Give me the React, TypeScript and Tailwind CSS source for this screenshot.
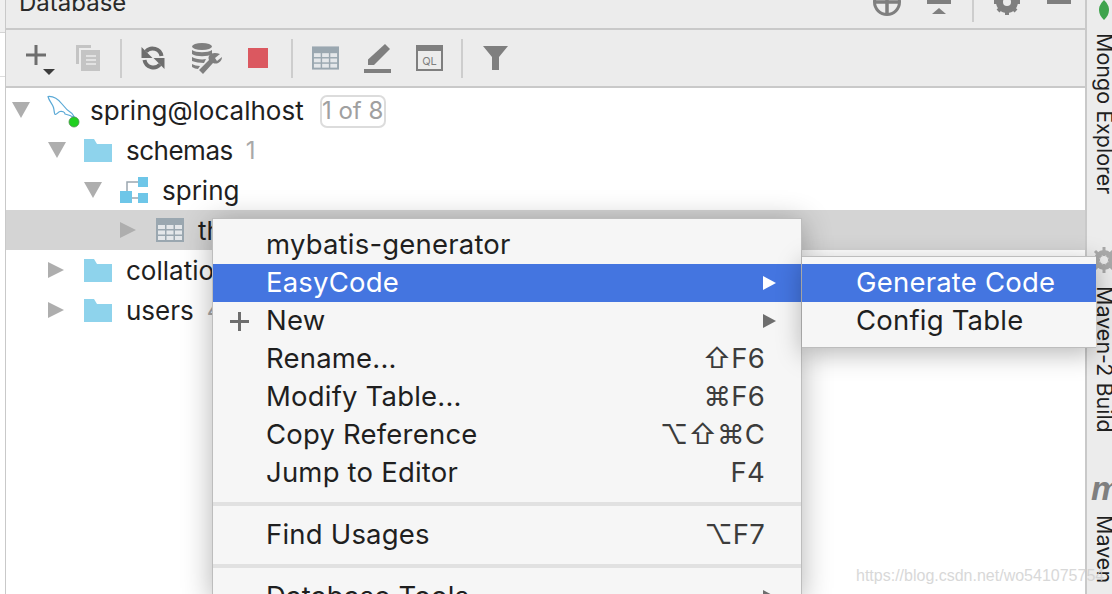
import React from "react";

const G = "#7f7f7f";

function TriDown() {
  return <svg width="18" height="16" viewBox="0 0 18 16" className="block"><path d="M0 0H18L9 16Z" fill="#aeaeae" /></svg>;
}
function TriRight() {
  return <svg width="16" height="16" viewBox="0 0 16 16" className="block"><path d="M0 0L16 8L0 16Z" fill="#aeaeae" /></svg>;
}
function Folder() {
  return <svg width="28" height="23" viewBox="0 0 28 23" className="block"><path d="M0 0H10L13 5H28V23H0Z" fill="#8ed3ec" /></svg>;
}
function TableIcon({ w = 28, h = 24 }: { w?: number; h?: number }) {
  return (
    <svg width={w} height={h} viewBox="0 0 28 24" className="block">
      <rect width="28" height="24" fill="#9aa7b0" />
      <g fill="#e4e7ea">
        <rect x="2" y="7" width="7" height="4" /><rect x="10.5" y="7" width="7" height="4" /><rect x="19" y="7" width="7" height="4" />
        <rect x="2" y="12.5" width="7" height="4" /><rect x="10.5" y="12.5" width="7" height="4" /><rect x="19" y="12.5" width="7" height="4" />
        <rect x="2" y="18" width="7" height="4" /><rect x="10.5" y="18" width="7" height="4" /><rect x="19" y="18" width="7" height="4" />
      </g>
    </svg>
  );
}
function SchemaIcon() {
  return (
    <svg width="28" height="26" viewBox="0 0 28 26" className="block">
      <path d="M7 15V5H18M11 21H18" stroke="#9aa7b0" strokeWidth="1.5" fill="none" />
      <rect x="18" y="0" width="10" height="10" fill="#6ec6e8" />
      <rect x="0" y="14" width="12" height="12" fill="#6ec6e8" />
      <rect x="18" y="16" width="10" height="10" fill="#6ec6e8" />
    </svg>
  );
}
function Dolphin() {
  return (
    <svg width="34" height="36" viewBox="0 0 34 36" className="block">
      <path d="M2 2.5C7 2 12 5 16 10C19 14 22 17 26 19.5L29 24C25 21.5 22 20.5 19 20C19 18 16 17 14 17.5C12 18 11 20.5 9.5 20.5C8 20.5 8.5 17 7.5 13.5C6.5 10 3 7 2 2.5Z" fill="none" stroke="#5aa9d6" strokeWidth="1.2" strokeLinejoin="round" />
      <circle cx="28" cy="28" r="5" fill="#1fd01f" stroke="#4f8f4f" strokeWidth="0.8" />
    </svg>
  );
}
function Sep() {
  return <div className="w-[2px] h-[39px] bg-[#cdcdcd]" />;
}
function Row({ pad, open, icon, label, count, badge, selected, tight }: { pad: string; open?: boolean; icon: React.ReactNode; label: string; count?: string; badge?: string; selected?: boolean; tight?: boolean }) {
  return (
    <div className={`h-10 flex items-center ${pad} ${selected ? "bg-[#d4d4d4]" : ""}`}>
      <div className="w-[36px] shrink-0">{open ? <TriDown /> : <TriRight />}</div>
      <div className="w-[42px] shrink-0">{icon}</div>
      <span className={`pt-[2px] text-[#1f1f1f] text-[26px] leading-none ${tight ? "tracking-[-0.5px]" : ""}`}>{label}</span>
      {count && <span className="pt-[2px] ml-[13px] text-[#a8a8a8] text-[24px] leading-none">{count}</span>}
      {badge && <span className="ml-[16px] mt-[2px] h-[33px] w-[66px] flex items-center justify-center border-2 border-[#dcdcdc] rounded-[7px] text-[#a0a0a0] text-[24px] leading-none">{badge}</span>}
    </div>
  );
}
function MenuRow({ label, shortcut, arrow, active, plus }: { label: string; shortcut?: string; arrow?: boolean; active?: boolean; plus?: boolean }) {
  return (
    <div className={`h-[38px] shrink-0 flex items-center pl-[17px] pr-[25px] ${active ? "bg-[#4475e0] text-white" : "text-[#1f1f1f]"}`}>
      <div className="w-[36px] shrink-0">
        {plus && <svg width="19" height="19" viewBox="0 0 19 19" className="block"><path d="M8 0H11V8H19V11H11V19H8V11H0V8H8Z" fill="#6e6e6e" /></svg>}
      </div>
      <span className="flex-1">{label}</span>
      {shortcut && <span className="mr-[11px] text-[#3c3c3c]">{shortcut}</span>}
      {arrow && <svg width="13" height="14" viewBox="0 0 13 14" className="block"><path d="M0 0L13 7L0 14Z" fill={active ? "#ffffff" : "#6e6e6e"} /></svg>}
    </div>
  );
}
function MenuSep() {
  return <div className="h-[24px] shrink-0 flex items-center"><div className="h-[4px] w-full bg-[#e1e1e1]" /></div>;
}
function Vert({ children }: { children: React.ReactNode }) {
  return <span className="block [writing-mode:vertical-rl] text-[#1f1f1f] text-[21.5px] leading-none whitespace-nowrap">{children}</span>;
}

export default function App() {
  return (
    <div className="relative w-[1112px] h-[594px] overflow-hidden flex bg-white font-['Inter','DejaVu_Sans',sans-serif]">
      {/* left gutter */}
      <div className="w-[5px] shrink-0 flex flex-col">
        <div className="h-[33px] bg-[#f0f0f0] border-b border-[#d4d4d4]" />
        <div className="h-[44px] bg-white border-b border-[#dddddd]" />
        <div className="flex-1 bg-white" />
      </div>
      {/* main panel */}
      <div className="flex-1 min-w-0 flex flex-col border-l border-[#c9c9c9]">
        <div className="h-[30px] shrink-0 bg-[#ececec] border-b-2 border-[#c9c9c9] flex items-start overflow-hidden pl-[13px] pr-[14px]">
          <span className="text-[24px] leading-none text-[#2a2a2a] mt-[-9px]">Database</span>
          <div className="ml-auto flex items-start">
            <svg width="28" height="28" viewBox="0 0 28 28" className="mt-[-12px] block">
              <circle cx="14" cy="14" r="12.5" fill="none" stroke={G} strokeWidth="3" />
              <path d="M14 2V26M2 14H26" stroke={G} strokeWidth="3.5" />
            </svg>
            <svg width="24" height="14" viewBox="0 0 24 14" className="ml-[26px] block">
              <rect width="24" height="4" fill={G} /><path d="M12 8L19 14H5Z" fill={G} />
            </svg>
            <div className="ml-[21px] w-[2px] h-[22px] bg-[#cdcdcd]" />
            <svg width="26" height="26" viewBox="0 0 26 26" className="ml-[20px] mt-[-11px] block">
              <circle cx="13" cy="13" r="8" fill="none" stroke={G} strokeWidth="6" />
              <path d="M13 0V26M0 13H26M4 4L22 22M22 4L4 22" stroke={G} strokeWidth="4" />
              <circle cx="13" cy="13" r="4" fill="#ececec" />
            </svg>
            <svg width="24" height="4" viewBox="0 0 24 4" className="ml-[27px] block"><rect width="24" height="4" fill={G} /></svg>
          </div>
        </div>
        <div className="h-[58px] shrink-0 bg-[#ececec] border-b-2 border-[#c9c9c9] flex items-center pl-[20px]">
          <svg width="29" height="30" viewBox="0 0 29 30" className="block mt-[4px]">
            <path d="M8.5 0H11.5V8.5H20V11.5H11.5V20H8.5V11.5H0V8.5H8.5Z" fill="#6e6e6e" />
            <path d="M17 24H29L23 30Z" fill="#3c3c3c" />
          </svg>
          <svg width="24" height="26" viewBox="0 0 24 26" className="ml-[21px] block">
            <path d="M0 0H15V3H3V19H0Z" fill="#c4c4c4" />
            <rect x="5" y="5" width="19" height="21" fill="#c4c4c4" />
            <path d="M10 11H20M10 15H20M10 19H20" stroke="#ececec" strokeWidth="1.5" />
          </svg>
          <div className="ml-[20px]"><Sep /></div>
          <svg width="24" height="24" viewBox="0 0 24 24" className="ml-[19px] block">
            <path d="M20.5 10A9 9 0 0 0 5 5.5" fill="none" stroke="#6e6e6e" strokeWidth="4" />
            <path d="M3.5 14A9 9 0 0 0 19 18.5" fill="none" stroke="#6e6e6e" strokeWidth="4" />
            <path d="M0.5 1V12H11.5Z" fill="#6e6e6e" /><path d="M23.5 23V12H12.5Z" fill="#6e6e6e" />
          </svg>
          <svg width="30" height="31" viewBox="0 0 30 31" className="ml-[27px] block">
            <ellipse cx="10" cy="3.5" rx="10" ry="3.5" fill={G} />
            <path d="M0 7C4 10 16 10 20 7V11C16 14 4 14 0 11Z" fill={G} />
            <path d="M0 14C3 16 10 17 14 16L12 20C8 20 3 19 0 18Z" fill={G} />
            <path d="M0 21C2 22 5 23 8 23L6 26C4 26 2 25 0 24Z" fill={G} />
            <path d="M28 11L23 15L25 18L30 14C30 18 26 22 21 20L11 31L7 27L17 17C15 12 20 8 28 11Z" fill={G} />
          </svg>
          <div className="ml-[26px] w-[20px] h-[20px] bg-[#db5860]" />
          <div className="ml-[23px]"><Sep /></div>
          <div className="ml-[19px]"><TableIcon w={27} h={24} /></div>
          <svg width="27" height="29" viewBox="0 0 27 29" className="ml-[25px] block">
            <path d="M21 0L26 5L10 21H4V15.5Z" fill={G} />
            <rect y="25" width="27" height="4" fill={G} />
          </svg>
          <svg width="27" height="26" viewBox="0 0 27 26" className="ml-[25px] block">
            <rect x="1" y="1" width="25" height="24" fill="none" stroke={G} strokeWidth="2" />
            <rect width="27" height="6" fill={G} />
            <text x="13.5" y="20" textAnchor="middle" fontSize="11" fontFamily="Inter" fill={G}>QL</text>
          </svg>
          <div className="ml-[18px]"><Sep /></div>
          <svg width="25" height="24" viewBox="0 0 25 24" className="ml-[20px] block">
            <path d="M0 0H25L16 11V24H9V11Z" fill={G} />
          </svg>
        </div>
        <div className="flex-1 pt-[2px] overflow-hidden">
          <Row pad="pl-[6px]" open icon={<div className="mt-[3px] -ml-[2px]"><Dolphin /></div>} label="spring@localhost" badge="1 of 8" />
          <Row pad="pl-[42px]" open tight icon={<Folder />} label="schemas" count="1" />
          <Row pad="pl-[78px]" open icon={<SchemaIcon />} label="spring" />
          <Row pad="pl-[114px]" selected icon={<TableIcon />} label="th" />
          <Row pad="pl-[42px]" icon={<Folder />} label="collations" />
          <Row pad="pl-[42px]" icon={<Folder />} label="users" count="4" />
        </div>
      </div>
      {/* right tool strip */}
      <div className="w-[27px] shrink-0 bg-[#ececec] border-l-2 border-[#c9c9c9] flex flex-col overflow-hidden pl-[6px]">
        <svg width="10" height="20" viewBox="0 0 10 20" className="block ml-[6px] shrink-0"><path d="M5 0C9 4 10 7 10 10C10 14 8 17 5 20C2 17 0 14 0 10C0 7 1 4 5 0Z" fill="#3fa34d" /></svg>
        <div className="mt-[13px] shrink-0"><Vert>Mongo Explorer</Vert></div>
        <svg width="24" height="26" viewBox="0 0 24 26" className="block mt-[53px] -ml-[1px] shrink-0">
          <circle cx="12" cy="13" r="7.5" fill="none" stroke="#a9a9a9" strokeWidth="5" />
          <path d="M12 0V26M0 13H24M3 4L21 22M21 4L3 22" stroke="#a9a9a9" strokeWidth="3" />
          <circle cx="12" cy="13" r="4" fill="#ececec" />
        </svg>
        <div className="mt-[13px] shrink-0"><Vert>Maven-2 Build</Vert></div>
        <span className="block mt-[40px] -ml-[2px] font-['Liberation_Sans',sans-serif] font-bold italic text-[34px] leading-[30px] text-[#7f7f7f] shrink-0">m</span>
        <div className="mt-[12px] shrink-0"><Vert>Maven</Vert></div>
      </div>

      {/* context menu */}
      <div className="absolute left-[212px] top-[218px] w-[590px] h-[380px] bg-[#f6f6f6] border-x border-t border-[#bdbdbd] shadow-[0_4px_28px_rgba(0,0,0,0.3)] flex flex-col pt-[7px] text-[27.5px] tracking-[0.2px] leading-none">
        <MenuRow label="mybatis-generator" />
        <MenuRow label="EasyCode" arrow active />
        <MenuRow label="New" arrow plus />
        <MenuRow label="Rename..." shortcut="⇧F6" />
        <MenuRow label="Modify Table..." shortcut="⌘F6" />
        <MenuRow label="Copy Reference" shortcut="⌥⇧⌘C" />
        <MenuRow label="Jump to Editor" shortcut="F4" />
        <MenuSep />
        <MenuRow label="Find Usages" shortcut="⌥F7" />
        <MenuSep />
        <MenuRow label="Database Tools" arrow />
      </div>
      {/* submenu */}
      <div className="absolute left-[802px] top-[256px] w-[294px] h-[92px] bg-[#f6f6f6] border-t border-b border-[#bdbdbd] shadow-[0_6px_24px_rgba(0,0,0,0.28)] flex flex-col pt-[7px] text-[27.5px] tracking-[0.2px] leading-none">
        <div className="h-[38px] flex items-center pl-[54px] bg-[#4475e0] text-white">Generate Code</div>
        <div className="h-[38px] flex items-center pl-[54px] text-[#1f1f1f]">Config Table</div>
      </div>
      {/* watermark */}
      <span className="absolute left-[856px] top-[566px] text-[16px] leading-[20px] text-[#cfcfcf] opacity-80 font-['Liberation_Sans',sans-serif] whitespace-nowrap">https://blog.csdn.net/wo541075754</span>
    </div>
  );
}
